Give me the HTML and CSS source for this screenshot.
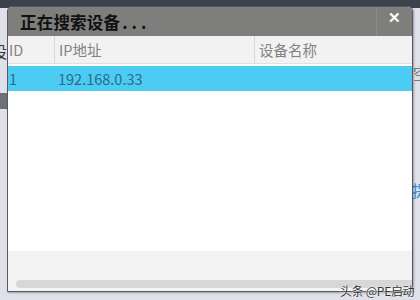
FILE: index.html
```html
<!DOCTYPE html>
<html>
<head>
<meta charset="utf-8">
<link rel="stylesheet" href="styles.css">
</head>
<body>
<div class="desk">
  <div class="topband"></div>
  <div class="frag frag-l1">设</div>
  <div class="frag-l2"></div>
  <div class="frag frag-r1">空</div>
  <div class="frag frag-r2">提</div>
  <div class="window">
    <div class="titlebar">
      <span class="title">正在搜索设备<span class="dots">...</span></span>
      <span class="close">✕</span>
    </div>
    <div class="thead">
      <div class="c1">ID</div>
      <div class="c2">IP地址</div>
      <div class="c3">设备名称</div>
    </div>
    <div class="row sel">
      <div class="c1">1</div>
      <div class="c2">192.168.0.33</div>
      <div class="c3"></div>
    </div>
    <div class="body"></div>
    <div class="foot">
      <div class="scroll"></div>
    </div>
  </div>
  <div class="wm">头条 @PE启动</div>
</div>
</body>
</html>
```
FILE: styles.css
```css
html, body { margin: 0; padding: 0; }
body { width: 420px; height: 300px; overflow: hidden; font-family: "Noto Sans CJK SC", "Noto Sans", sans-serif; }
.desk { position: relative; width: 420px; height: 300px; background: #dfe0ea; padding: 6px 0 0 7px; box-sizing: border-box; overflow: hidden; }
.topband { position: absolute; left: 0; top: 0; width: 420px; height: 8px; background: #3c424c; }
.frag { position: absolute; font-size: 16px; line-height: 18px; }
.frag-l1 { left: -9px; top: 42px; color: #333; }
.frag-l2 { position: absolute; left: 0; top: 93px; width: 7px; height: 16px; background: #6e7178; }
.frag-r1 { left: 413px; top: 64px; color: #777; }
.frag-r2 { left: 412px; top: 181px; color: #2f8fd0; }
.window { position: relative; width: 406px; height: 286px; background: #fff; border: 1px solid #555a62; border-radius: 5px 5px 0 0; box-sizing: border-box; display: flex; flex-direction: column; overflow: hidden; box-shadow: 1px 1px 2px rgba(0,0,0,0.3); }
.titlebar { height: 29px; flex: none; background: #7e7e7c; display: flex; align-items: center; justify-content: space-between; }
.title { padding-left: 12px; font-size: 16.5px; font-weight: 700; color: #111; letter-spacing: 0.2px; }
.dots { letter-spacing: 4px; margin-left: 2px; }
.close { width: 36px; height: 29px; border-left: 1px solid #8c8c8a; box-sizing: border-box; display: flex; align-items: center; justify-content: center; color: #fff; font-size: 15px; font-weight: 700; padding-bottom: 10px; }
.thead { height: 27px; flex: none; background: #f2f2f2; border-bottom: 1px solid #e0e0e0; display: flex; align-items: center; color: #828282; font-size: 14.5px; }
.thead > div { height: 100%; display: flex; align-items: center; }
.c1 { width: 46px; padding-left: 1px; box-sizing: border-box; }
.c2 { width: 200px; padding-left: 4px; box-sizing: border-box; }
.c3 { flex: 1; padding-left: 4px; box-sizing: border-box; }
.thead .c2, .thead .c3 { border-left: 1px solid #d8d8d8; }
.row { height: 25px; flex: none; margin-top: 2px; display: flex; align-items: center; font-size: 14.5px; }
.sel { background: #4ccbf3; color: #2d6a88; }
.body { flex: 1; background: #fefefe; }
.foot { height: 40px; flex: none; background: #f3f3f3; display: flex; align-items: flex-end; padding: 0 0 3px 8px; box-sizing: border-box; }
.scroll { flex: 1; height: 8px; background: #d7d7d7; border-radius: 4px 0 0 4px; }
.wm { position: absolute; left: 340px; top: 282px; font-size: 12px; color: #333; text-shadow: 0 0 2px #fff, 0 0 1px #fff; letter-spacing: -0.3px; }
```
